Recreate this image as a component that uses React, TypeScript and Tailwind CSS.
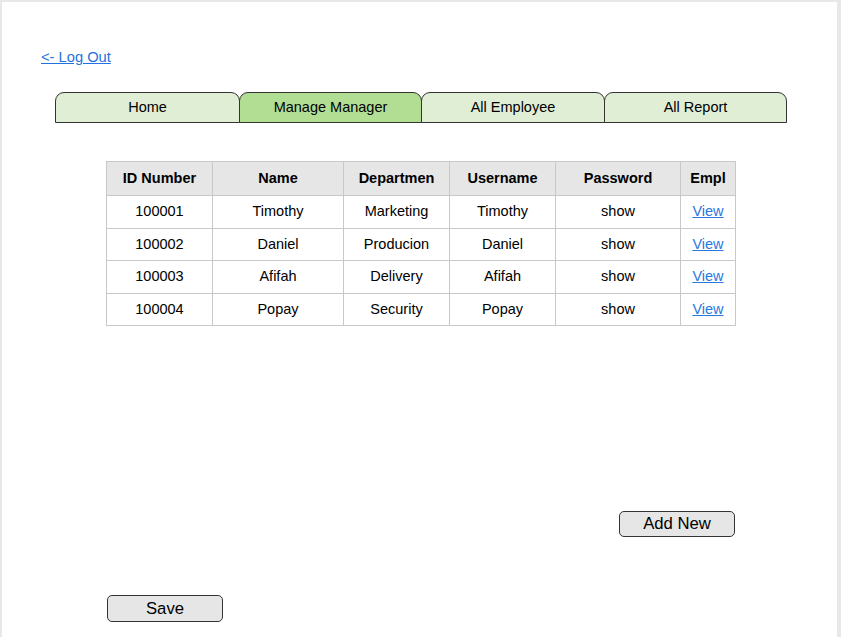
import React from "react";

const cols = [106, 131, 106, 106, 125, 55];
const headers = ["ID Number", "Name", "Departmen", "Username", "Password", "Empl"];
const rows = [
  ["100001", "Timothy", "Marketing", "Timothy", "show"],
  ["100002", "Daniel", "Producion", "Daniel", "show"],
  ["100003", "Afifah", "Delivery", "Afifah", "show"],
  ["100004", "Popay", "Security", "Popay", "show"],
];
const rowH = [33, 32, 33, 32];
const tabs = [
  { label: "Home", w: 185, active: false },
  { label: "Manage Manager", w: 183, active: true },
  { label: "All Employee", w: 184, active: false },
  { label: "All Report", w: 183, active: false },
];

export default function App() {
  return (
    <div
      className="w-[841px] h-[637px] bg-white border-t-2 border-l-2 border-r-4 border-[#e8e8e8] overflow-hidden text-black"
      style={{ fontFamily: '"Liberation Sans", Arial, sans-serif' }}
    >
      <div className="flex flex-col">
        <div className="mt-[47px] ml-[39px] h-4 leading-4">
          <a href="#" className="text-[14.7px] text-[#1f72e0] underline">
            &lt;- Log Out
          </a>
        </div>

        <div className="mt-[27px] ml-[53px] flex items-end">
          {tabs.map((t, i) => (
            <div
              key={t.label}
              className={`h-[31px] ${i > 0 ? "-ml-px" : ""} rounded-t-[9px] border border-[#333] flex items-center justify-center text-[14.5px] ${
                t.active ? "bg-[#b2de94]" : "bg-[#e0eed6]"
              }`}
              style={{ width: t.w }}
            >
              {t.label}
            </div>
          ))}
        </div>

        <div className="mt-[38px] ml-[104px] w-[630px] border-t border-l border-[#c8c8c8] text-[14.5px]">
          <div className="flex h-[34px] bg-[#e6e6e6]">
            {headers.map((h, i) => (
              <div
                key={h}
                className="border-r border-b border-[#c8c8c8] flex items-center justify-center font-bold overflow-hidden whitespace-nowrap"
                style={{ width: cols[i] }}
              >
                {h}
              </div>
            ))}
          </div>
          {rows.map((r, ri) => (
            <div key={ri} className="flex" style={{ height: rowH[ri] }}>
              {r.map((c, ci) => (
                <div
                  key={ci}
                  className="border-r border-b border-[#c8c8c8] flex items-center justify-center whitespace-nowrap"
                  style={{ width: cols[ci] }}
                >
                  {c}
                </div>
              ))}
              <div
                className="border-r border-b border-[#c8c8c8] flex items-center justify-center"
                style={{ width: cols[5] }}
              >
                <a href="#" className="text-[#2a78de] underline">
                  View
                </a>
              </div>
            </div>
          ))}
        </div>

        <div className="mt-[185px] ml-[617px] w-[116px] h-[26px] rounded-[5px] border border-[#333] bg-[#e6e6e6] flex items-center justify-center text-[16.7px]">
          Add New
        </div>

        <div className="mt-[58px] ml-[105px] w-[116px] h-[27px] rounded-[5px] border border-[#333] bg-[#e6e6e6] flex items-center justify-center text-[16.7px]">
          Save
        </div>
      </div>
    </div>
  );
}
